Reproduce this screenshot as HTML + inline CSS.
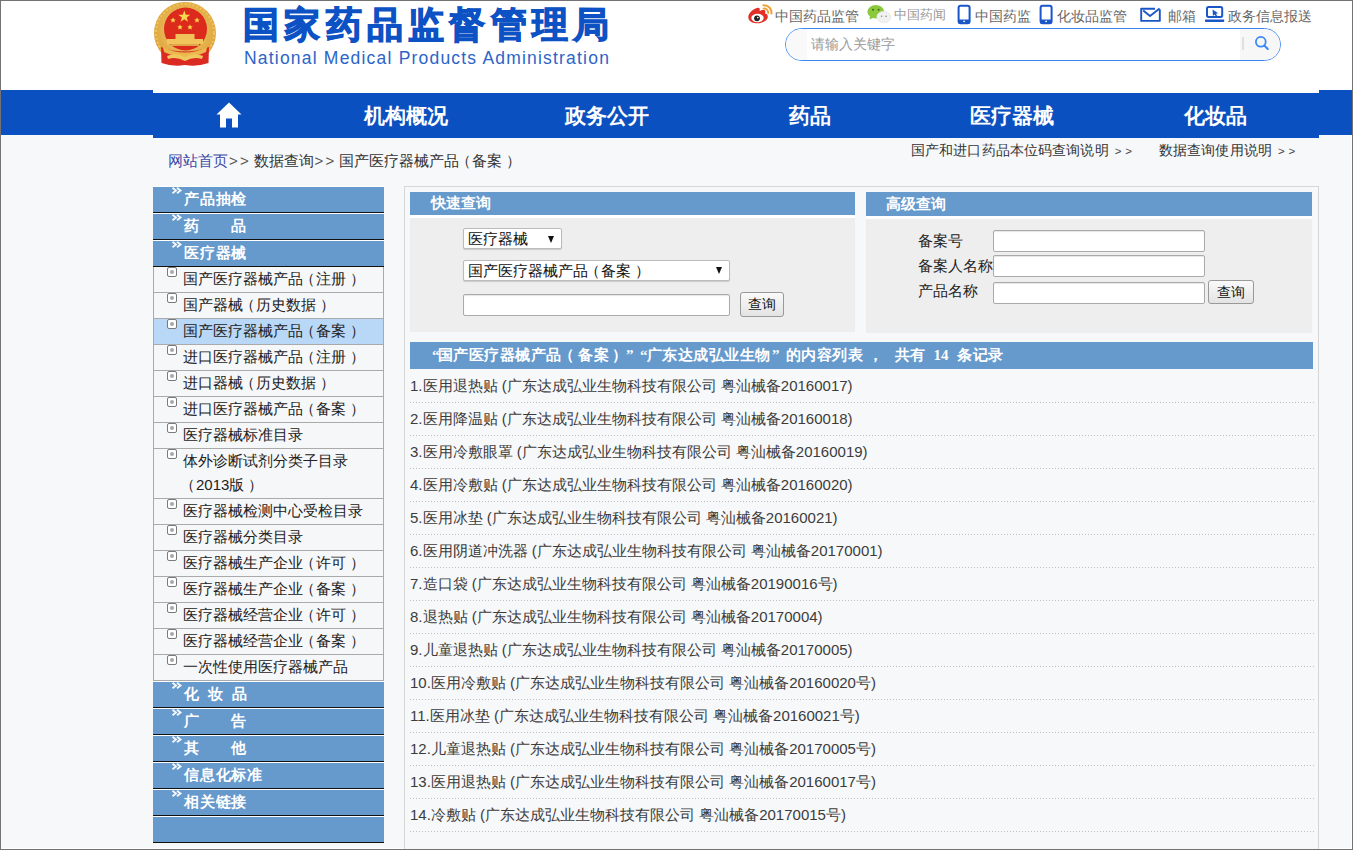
<!DOCTYPE html>
<html><head><meta charset="utf-8">
<style>
*{margin:0;padding:0;box-sizing:border-box}
html,body{width:1353px;height:850px;overflow:hidden}
body{position:relative;background:#f7f8fa;font-family:"Liberation Sans",sans-serif;color:#333}
.abs{position:absolute}
#frame{position:absolute;left:0;top:0;width:1353px;height:850px;border:1px solid #737373;z-index:50;pointer-events:none}
#frame2{position:absolute;left:0;top:0;width:1352px;height:849px;border-right:1px solid #fff;border-bottom:1px solid #fff}
#hdr{position:absolute;left:0;top:0;width:1353px;height:93px;background:#fff}
.title{position:absolute;left:243px;top:2px;font-size:36px;line-height:46px;font-weight:bold;color:#0d52c4;letter-spacing:5.3px;-webkit-text-stroke:1.2px #0d52c4;white-space:nowrap}
.eng{position:absolute;left:244px;top:48px;font-size:17.5px;line-height:20px;color:#2c64c8;letter-spacing:1.2px;white-space:nowrap}
.tl{position:absolute;top:6px;font-size:14px;line-height:20px;color:#666;white-space:nowrap}
#search{position:absolute;left:785px;top:28px;width:496px;height:33px;border:1.6px solid #3a86f0;border-radius:17px;background:#fff;overflow:hidden}
.nav{position:absolute;top:93px;left:153px;width:1166px;height:45px;background:#0b50c0}
.navl{position:absolute;top:90px;height:45px;background:#0b50c0}
.nt{position:absolute;top:101.5px;font-size:21px;line-height:28px;font-weight:bold;color:#fff;white-space:nowrap;transform:translateX(-50%)}
.crumb{position:absolute;left:168px;top:151px;font-size:15px;line-height:20px;color:#333;white-space:nowrap}
.gt{font-size:11.5px;margin-left:6px;letter-spacing:3.8px;color:#444}
.rl{position:absolute;top:140px;font-size:14px;line-height:20px;color:#333;white-space:nowrap}
/* sidebar */
#side{position:absolute;left:153px;top:186px;width:231px}
.sh{height:27px;border-top:1px solid #fff;background:#6699cc;border-bottom:1px solid #111;position:relative;color:#fff;font-weight:bold;font-size:15px;line-height:24px;padding-left:31px;white-space:pre;letter-spacing:0.8px;font-family:"Liberation Serif",serif}
.chev{position:absolute;left:18px;top:0px}
.si{position:relative;border-left:1px solid #aaa;border-right:1px solid #aaa;border-bottom:1px solid #aaa;background:#f6f7f9;font-size:15px;line-height:24px;padding:0 0 1px 29px;color:#222;white-space:nowrap}
.lp{margin-left:-3px;margin-right:1px}
.rp{margin-left:4px}
.si.sel{background:#b9d7f7}
.si .bx{position:absolute;left:13px;top:0;width:10px;height:10px;border:1px solid #7a7a7a;border-radius:2px;background:#fff}
.si .bx:after{content:"";position:absolute;left:2px;top:2px;width:4px;height:4px;border-radius:50%;background:#a8a8a8}
/* panel */
#panel{position:absolute;left:404px;top:186px;width:915px;height:700px;border:1px solid #d6d6d6;background:#f7f8fa}
.bh{position:absolute;background:#6699cc;color:#fff;font-weight:bold;font-size:15px;font-family:"Liberation Serif",serif;white-space:nowrap}
.gb{position:absolute;background:#eee}
.sel1{position:absolute;background:#fff;border:1px solid #bbb;border-radius:2px;box-shadow:0 1px 1px rgba(0,0,0,.15);font-size:15px;color:#111;white-space:nowrap}
.arr{position:absolute;width:0;height:0;border-left:3.6px solid transparent;border-right:3.6px solid transparent;border-top:7px solid #111}
.inp{position:absolute;background:#fff;border:1px solid #aaa;border-radius:2px;box-shadow:inset 0 1px 1px rgba(0,0,0,.1)}
.btn{position:absolute;border:1px solid #999;border-radius:3px;background:linear-gradient(#fafafa,#e3e3e3);font-size:14px;color:#111;text-align:center;white-space:nowrap}
.lab{position:absolute;font-size:15px;line-height:20px;color:#222;white-space:nowrap}
.li{position:absolute;left:410px;width:904px;height:33px;font-size:15px;line-height:20px;color:#3c3c3c;white-space:nowrap}
.li .dl{position:absolute;left:0;bottom:0;width:904px;height:1px;background:repeating-linear-gradient(90deg,#c2c2c2 0 1px,transparent 1px 3px)}
</style></head><body>
<div id="hdr"></div>
<div id="frame2"></div>

<!-- emblem -->
<svg class="abs" style="left:150px;top:0" width="70" height="70" viewBox="0 0 70 70">
 <defs><radialGradient id="gd" cx="50%" cy="45%" r="55%"><stop offset="0" stop-color="#f7d77a"/><stop offset="1" stop-color="#dca13a"/></radialGradient></defs>
 <circle cx="35" cy="33" r="31" fill="url(#gd)"/>
 <circle cx="35" cy="33" r="29" fill="none" stroke="#f0c35a" stroke-width="2" stroke-dasharray="2 2"/>
 <circle cx="35.5" cy="29" r="21.5" fill="#dc2a1c"/>
 <path d="M11 47 Q35 56 59 47 L58.5 63 Q47 67 35 65 Q23 67 11.5 63Z" fill="#da2a22"/>
 <path d="M13 47 Q35 58 57 47 L56 52 Q35 62 14 52Z" fill="#ebb84e"/>
 <path d="M17 56 Q26 52 35 57 Q44 52 53 56 L52 59 Q44 56 35 61 Q26 56 18 59Z" fill="#f0c860"/>
 <rect x="25.5" y="34" width="19" height="5" fill="#f0c15a"/>
 <rect x="17" y="39" width="36" height="5" fill="#f2c55c"/>
 <rect x="21" y="44" width="28" height="2" fill="#e2a64a"/>
 <polygon points="34.3,10.5 35.8,14.8 40.3,14.8 36.7,17.5 38,21.8 34.3,19.2 30.6,21.8 31.9,17.5 28.3,14.8 32.8,14.8" fill="#f8d84e"/>
 <polygon points="23,17.5 23.9,19.3 25.8,19.4 24.3,20.6 24.8,22.5 23,21.4 21.2,22.5 21.7,20.6 20.2,19.4 22.1,19.3" fill="#f8d84e"/>
 <polygon points="47,17.5 47.9,19.3 49.8,19.4 48.3,20.6 48.8,22.5 47,21.4 45.2,22.5 45.7,20.6 44.2,19.4 46.1,19.3" fill="#f8d84e"/>
 <polygon points="30,24.5 30.9,26.3 32.8,26.4 31.3,27.6 31.8,29.5 30,28.4 28.2,29.5 28.7,27.6 27.2,26.4 29.1,26.3" fill="#f8d84e"/>
 <polygon points="40,24.5 40.9,26.3 42.8,26.4 41.3,27.6 41.8,29.5 40,28.4 38.2,29.5 38.7,27.6 37.2,26.4 39.1,26.3" fill="#f8d84e"/>
</svg>
<div class="title">国家药品监督管理局</div>
<div class="eng">National Medical Products Administration</div>

<!-- top icons -->
<svg class="abs" style="left:746px;top:3px" width="28" height="22" viewBox="0 0 28 22">
 <path d="M9.5 5.5 C4.5 8 1.5 12 2.5 15.5 C3.5 19 8 20.5 12 20.3 C17.5 20 21.5 17 21.8 14 C22 11.8 20.5 10.8 19 10.6 C19.6 9 19.6 7.5 18.2 7 C16.8 6.6 14.8 7.4 13.6 8 C14 6.4 13.8 5 12.8 4.7 C12 4.5 10.8 4.8 9.5 5.5Z" fill="#e03028"/>
 <ellipse cx="11.5" cy="15" rx="6.2" ry="4.2" fill="#fff"/>
 <circle cx="11" cy="15.3" r="2.9" fill="#222"/>
 <circle cx="11.8" cy="14.6" r="0.8" fill="#fff"/>
 <path d="M17.5 2.2 A7.5 7.5 0 0 1 25.5 10.5" fill="none" stroke="#f0a030" stroke-width="2" stroke-linecap="round"/>
 <path d="M17.5 5.6 A4 4 0 0 1 22.2 10" fill="none" stroke="#f0a030" stroke-width="1.8" stroke-linecap="round"/>
</svg>
<svg class="abs" style="left:866px;top:3px" width="28" height="22" viewBox="0 0 28 22">
 <ellipse cx="9.8" cy="8.8" rx="8.4" ry="6.8" fill="#8cc83c"/>
 <path d="M4 13 L3.5 16.5 L8 14.5Z" fill="#8cc83c"/>
 <circle cx="7" cy="6.8" r="1" fill="#3a6a1a"/><circle cx="12.6" cy="6.8" r="1" fill="#3a6a1a"/>
 <ellipse cx="17.8" cy="14" rx="7" ry="5.8" fill="#f1f1f1" stroke="#e0e0e0" stroke-width="0.6"/>
 <path d="M21 18.5 L22.5 20.5 L18.5 19.5Z" fill="#f1f1f1"/>
 <circle cx="15.6" cy="13.3" r="0.8" fill="#888"/><circle cx="20" cy="13.3" r="0.8" fill="#888"/>
</svg>
<svg class="abs" style="left:956px;top:4px" width="16" height="21" viewBox="0 0 16 21">
 <rect x="2.6" y="1.7" width="11" height="17.6" rx="2" fill="none" stroke="#1a56c8" stroke-width="2"/>
 <rect x="2.6" y="15.5" width="11" height="4" fill="#1a56c8"/>
 <circle cx="8.1" cy="17.3" r="0.9" fill="#fff"/>
</svg>
<svg class="abs" style="left:1038px;top:4px" width="16" height="21" viewBox="0 0 16 21">
 <rect x="2.6" y="1.7" width="11" height="17.6" rx="2" fill="none" stroke="#1a56c8" stroke-width="2"/>
 <rect x="2.6" y="15.5" width="11" height="4" fill="#1a56c8"/>
 <circle cx="8.1" cy="17.3" r="0.9" fill="#fff"/>
</svg>
<svg class="abs" style="left:1138px;top:6px" width="24" height="18" viewBox="0 0 24 18">
 <path d="M17 2.8 L3.2 2.8 L3.2 14.9 L21.8 14.9 L21.8 3.2" fill="none" stroke="#1a56c8" stroke-width="1.9" stroke-linejoin="round"/>
 <path d="M5.2 4.6 L12 10 L21.6 2.6" fill="none" stroke="#1a56c8" stroke-width="1.9" stroke-linejoin="round"/>
</svg>
<svg class="abs" style="left:1203px;top:4px" width="22" height="20" viewBox="0 0 22 20">
 <rect x="4" y="2.9" width="15.2" height="10" rx="1.6" fill="none" stroke="#1a56c8" stroke-width="2"/>
 <path d="M9.6 5.4 L15.2 9.2 L12.9 9.8 L14.3 12.2 L13.1 12.9 L11.7 10.6 L9.9 12Z" fill="#1a56c8"/>
 <path d="M2 15.6 L21.2 15.6 L21.2 17.2 Q21.2 17.9 20.5 17.9 L2.7 17.9 Q2 17.9 2 17.2Z" fill="#1a56c8"/>
</svg>
<!-- top links -->
<div class="tl" style="left:775px">中国药品监管</div>
<div class="tl" style="left:894px;top:5px;color:#999;font-size:13px">中国药闻</div>
<div class="tl" style="left:975px">中国药监</div>
<div class="tl" style="left:1057px">化妆品监管</div>
<div class="tl" style="left:1168px">邮箱</div>
<div class="tl" style="left:1228px">政务信息报送</div>

<div id="search">
  <div class="abs" style="left:0;top:0;width:21px;height:100%;background:#f9f9f9"></div>
  <div class="abs" style="left:25px;top:5px;font-size:14px;line-height:20px;color:#999">请输入关键字</div>
  <div class="abs" style="left:454px;top:0;width:45px;height:100%;background:#f7f7f7"></div>
  <div class="abs" style="left:456px;top:8px;width:2px;height:13px;background:#e0e0e0"></div>
  <svg class="abs" style="left:464px;top:3px" width="22" height="22" viewBox="0 0 22 22"><circle cx="10.8" cy="9.8" r="4.9" fill="none" stroke="#3a88f6" stroke-width="1.8"/><path d="M14.3 13.5 L17.8 17" stroke="#3a88f6" stroke-width="2" stroke-linecap="round"/></svg>
</div>

<!-- nav -->
<div class="navl" style="left:1px;width:152px"></div>
<div class="navl" style="left:1319px;width:34px"></div>
<div class="nav"></div>
<svg class="abs" style="left:216px;top:102px" width="26" height="26" viewBox="0 0 26 26"><path d="M13 0.5 L25.5 12.5 L22 12.5 L22 25.5 L16 25.5 L16 16.5 L10 16.5 L10 25.5 L4 25.5 L4 12.5 L0.5 12.5 Z" fill="#fff"/></svg>
<div class="nt" style="left:406px">机构概况</div>
<div class="nt" style="left:607px">政务公开</div>
<div class="nt" style="left:810px">药品</div>
<div class="nt" style="left:1012px">医疗器械</div>
<div class="nt" style="left:1215px">化妆品</div>

<!-- breadcrumb -->
<div class="crumb"><span style="color:#3b4ba8">网站首页</span><span style="margin-left:1px;letter-spacing:2.2px;color:#555">&gt;&gt;</span><span style="letter-spacing:-1.6px"> </span>数据查询<span style="margin-left:1px;letter-spacing:2.2px;color:#555">&gt;&gt;</span><span style="letter-spacing:-1.6px"> </span>国产医疗器械产品<span class="lp">（</span>备案<span class="rp">）</span></div>
<div class="rl" style="left:911px;letter-spacing:0.12px">国产和进口药品本位码查询说明<span class="gt">&gt;&gt;</span></div>
<div class="rl" style="left:1159px;letter-spacing:0.12px">数据查询使用说明<span class="gt">&gt;&gt;</span></div>

<!-- sidebar -->
<div id="side">
 <div class="sh"><svg class="chev" width="12" height="8" viewBox="0 0 12 8"><path d="M1.5 0.8 L5 3.5 L1.5 6.2 M6 0.8 L9.5 3.5 L6 6.2" fill="none" stroke="#fff" stroke-width="1.9" opacity="0.92"/></svg>产品抽检</div>
 <div class="sh"><svg class="chev" width="12" height="8" viewBox="0 0 12 8"><path d="M1.5 0.8 L5 3.5 L1.5 6.2 M6 0.8 L9.5 3.5 L6 6.2" fill="none" stroke="#fff" stroke-width="1.9" opacity="0.92"/></svg>药　　品</div>
 <div class="sh"><svg class="chev" width="12" height="8" viewBox="0 0 12 8"><path d="M1.5 0.8 L5 3.5 L1.5 6.2 M6 0.8 L9.5 3.5 L6 6.2" fill="none" stroke="#fff" stroke-width="1.9" opacity="0.92"/></svg>医疗器械</div>
 <div class="si"><i class="bx"></i>国产医疗器械产品<span class="lp">（</span>注册<span class="rp">）</span></div>
 <div class="si"><i class="bx"></i>国产器械<span class="lp">（</span>历史数据<span class="rp">）</span></div>
 <div class="si sel"><i class="bx"></i>国产医疗器械产品<span class="lp">（</span>备案<span class="rp">）</span></div>
 <div class="si"><i class="bx"></i>进口医疗器械产品<span class="lp">（</span>注册<span class="rp">）</span></div>
 <div class="si"><i class="bx"></i>进口器械<span class="lp">（</span>历史数据<span class="rp">）</span></div>
 <div class="si"><i class="bx"></i>进口医疗器械产品<span class="lp">（</span>备案<span class="rp">）</span></div>
 <div class="si"><i class="bx"></i>医疗器械标准目录</div>
 <div class="si" style="white-space:normal"><i class="bx"></i>体外诊断试剂分类子目录<br><span class="lp">（</span>2013版<span class="rp">）</span></div>
 <div class="si"><i class="bx"></i>医疗器械检测中心受检目录</div>
 <div class="si"><i class="bx"></i>医疗器械分类目录</div>
 <div class="si"><i class="bx"></i>医疗器械生产企业<span class="lp">（</span>许可<span class="rp">）</span></div>
 <div class="si"><i class="bx"></i>医疗器械生产企业<span class="lp">（</span>备案<span class="rp">）</span></div>
 <div class="si"><i class="bx"></i>医疗器械经营企业<span class="lp">（</span>许可<span class="rp">）</span></div>
 <div class="si"><i class="bx"></i>医疗器械经营企业<span class="lp">（</span>备案<span class="rp">）</span></div>
 <div class="si"><i class="bx"></i>一次性使用医疗器械产品</div>
 <div class="sh"><svg class="chev" width="12" height="8" viewBox="0 0 12 8"><path d="M1.5 0.8 L5 3.5 L1.5 6.2 M6 0.8 L9.5 3.5 L6 6.2" fill="none" stroke="#fff" stroke-width="1.9" opacity="0.92"/></svg>化&ensp;妆&ensp;品</div>
 <div class="sh"><svg class="chev" width="12" height="8" viewBox="0 0 12 8"><path d="M1.5 0.8 L5 3.5 L1.5 6.2 M6 0.8 L9.5 3.5 L6 6.2" fill="none" stroke="#fff" stroke-width="1.9" opacity="0.92"/></svg>广　　告</div>
 <div class="sh"><svg class="chev" width="12" height="8" viewBox="0 0 12 8"><path d="M1.5 0.8 L5 3.5 L1.5 6.2 M6 0.8 L9.5 3.5 L6 6.2" fill="none" stroke="#fff" stroke-width="1.9" opacity="0.92"/></svg>其　　他</div>
 <div class="sh"><svg class="chev" width="12" height="8" viewBox="0 0 12 8"><path d="M1.5 0.8 L5 3.5 L1.5 6.2 M6 0.8 L9.5 3.5 L6 6.2" fill="none" stroke="#fff" stroke-width="1.9" opacity="0.92"/></svg>信息化标准</div>
 <div class="sh"><svg class="chev" width="12" height="8" viewBox="0 0 12 8"><path d="M1.5 0.8 L5 3.5 L1.5 6.2 M6 0.8 L9.5 3.5 L6 6.2" fill="none" stroke="#fff" stroke-width="1.9" opacity="0.92"/></svg>相关链接</div>
 <div class="sh"></div>
</div>

<!-- panel -->
<div id="panel"></div>
<div class="bh" style="left:410px;top:192px;width:445px;height:23px;line-height:23px;padding-left:21px">快速查询</div>
<div class="abs" style="left:410px;top:215px;width:445px;height:3px;background:#fff"></div>
<div class="gb" style="left:410px;top:218px;width:445px;height:114px"></div>
<div class="sel1" style="left:463px;top:228px;width:99px;height:21px;padding-left:4px;line-height:19px">医疗器械<i class="arr" style="left:84px;top:7px"></i></div>
<div class="sel1" style="left:463px;top:260px;width:267px;height:21px;padding-left:4px;line-height:19px">国产医疗器械产品<span class="lp">（</span>备案<span class="rp">）</span><i class="arr" style="left:252px;top:6px"></i></div>
<div class="inp" style="left:463px;top:294px;width:267px;height:22px"></div>
<div class="btn" style="left:740px;top:292px;width:44px;height:25px;line-height:23px">查询</div>

<div class="bh" style="left:866px;top:192px;width:446px;height:24px;line-height:24px;padding-left:20px">高级查询</div>
<div class="abs" style="left:866px;top:216px;width:446px;height:3px;background:#fff"></div>
<div class="gb" style="left:866px;top:219px;width:446px;height:114px"></div>
<div class="lab" style="left:918px;top:231px">备案号</div>
<div class="lab" style="left:918px;top:256px">备案人名称</div>
<div class="lab" style="left:918px;top:281px">产品名称</div>
<div class="inp" style="left:993px;top:230px;width:212px;height:22px"></div>
<div class="inp" style="left:993px;top:255px;width:212px;height:22px"></div>
<div class="inp" style="left:993px;top:282px;width:212px;height:22px"></div>
<div class="btn" style="left:1208px;top:280px;width:46px;height:24px;line-height:22px">查询</div>

<div class="bh" style="left:410px;top:342px;width:903px;height:27px;line-height:27px"></div>
<div class="bh" style="left:432px;top:342px;height:27px;line-height:27px;background:none;">“</div>
<div class="bh" style="left:437.5px;top:342px;height:27px;line-height:27px;background:none;letter-spacing:0.55px;">国产医疗器械产品</div>
<div class="bh" style="left:559px;top:342px;height:27px;line-height:27px;background:none;">（</div><div class="bh" style="left:578px;top:342px;height:27px;line-height:27px;background:none;letter-spacing:0.55px;">备案</div><div class="bh" style="left:612px;top:342px;height:27px;line-height:27px;background:none;">）</div>
<div class="bh" style="left:626px;top:342px;height:27px;line-height:27px;background:none;">”</div>
<div class="bh" style="left:640px;top:342px;height:27px;line-height:27px;background:none;">“</div>
<div class="bh" style="left:646.5px;top:342px;height:27px;line-height:27px;background:none;letter-spacing:0.55px;">广东达成弘业生物</div>
<div class="bh" style="left:772px;top:342px;height:27px;line-height:27px;background:none;">”</div>
<div class="bh" style="left:785.5px;top:342px;height:27px;line-height:27px;background:none;letter-spacing:0.55px;">的内容列表</div>
<div class="bh" style="left:868px;top:342px;height:27px;line-height:27px;background:none;">，</div>
<div class="bh" style="left:894.5px;top:342px;height:27px;line-height:27px;background:none;letter-spacing:0.55px;">共有</div>
<div class="bh" style="left:933.5px;top:342px;height:27px;line-height:27px;background:none;">14</div>
<div class="bh" style="left:957px;top:342px;height:27px;line-height:27px;background:none;letter-spacing:0.55px;">条记录</div>


<div class="li" style="top:370px"><div style="position:absolute;top:5.5px">1.医用退热贴 (广东达成弘业生物科技有限公司 粤汕械备20160017)</div><i class="dl"></i></div>
<div class="li" style="top:403px"><div style="position:absolute;top:5.5px">2.医用降温贴 (广东达成弘业生物科技有限公司 粤汕械备20160018)</div><i class="dl"></i></div>
<div class="li" style="top:436px"><div style="position:absolute;top:5.5px">3.医用冷敷眼罩 (广东达成弘业生物科技有限公司 粤汕械备20160019)</div><i class="dl"></i></div>
<div class="li" style="top:469px"><div style="position:absolute;top:5.5px">4.医用冷敷贴 (广东达成弘业生物科技有限公司 粤汕械备20160020)</div><i class="dl"></i></div>
<div class="li" style="top:502px"><div style="position:absolute;top:5.5px">5.医用冰垫 (广东达成弘业生物科技有限公司 粤汕械备20160021)</div><i class="dl"></i></div>
<div class="li" style="top:535px"><div style="position:absolute;top:5.5px">6.医用阴道冲洗器 (广东达成弘业生物科技有限公司 粤汕械备20170001)</div><i class="dl"></i></div>
<div class="li" style="top:568px"><div style="position:absolute;top:5.5px">7.造口袋 (广东达成弘业生物科技有限公司 粤汕械备20190016号)</div><i class="dl"></i></div>
<div class="li" style="top:601px"><div style="position:absolute;top:5.5px">8.退热贴 (广东达成弘业生物科技有限公司 粤汕械备20170004)</div><i class="dl"></i></div>
<div class="li" style="top:634px"><div style="position:absolute;top:5.5px">9.儿童退热贴 (广东达成弘业生物科技有限公司 粤汕械备20170005)</div><i class="dl"></i></div>
<div class="li" style="top:667px"><div style="position:absolute;top:5.5px">10.医用冷敷贴 (广东达成弘业生物科技有限公司 粤汕械备20160020号)</div><i class="dl"></i></div>
<div class="li" style="top:700px"><div style="position:absolute;top:5.5px">11.医用冰垫 (广东达成弘业生物科技有限公司 粤汕械备20160021号)</div><i class="dl"></i></div>
<div class="li" style="top:733px"><div style="position:absolute;top:5.5px">12.儿童退热贴 (广东达成弘业生物科技有限公司 粤汕械备20170005号)</div><i class="dl"></i></div>
<div class="li" style="top:766px"><div style="position:absolute;top:5.5px">13.医用退热贴 (广东达成弘业生物科技有限公司 粤汕械备20160017号)</div><i class="dl"></i></div>
<div class="li" style="top:799px"><div style="position:absolute;top:5.5px">14.冷敷贴 (广东达成弘业生物科技有限公司 粤汕械备20170015号)</div><i class="dl"></i></div>

<div id="frame"></div>
</body></html>
